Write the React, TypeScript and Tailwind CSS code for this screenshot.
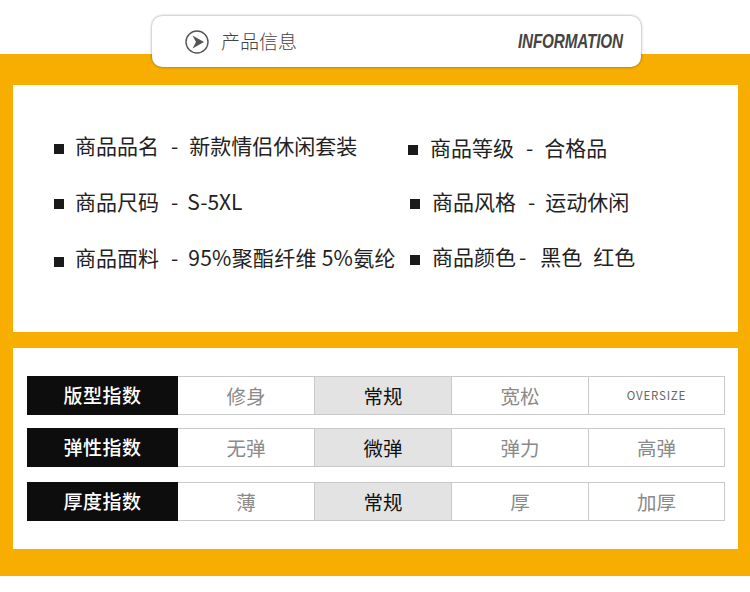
const font = { fontFamily: '"Noto Sans CJK SC", sans-serif' };

function Info({ label, sep, value, className, sq, gap }: { label: string; sep: string; value: React.ReactNode; className: string; sq: string; gap: string }) {
  return (
    <div className={`flex items-center h-[30px] text-[21px] leading-[30px] text-[#222] whitespace-nowrap ${className}`}>
      <span className={`w-[10px] h-[10px] bg-[#1a1a1a] shrink-0 ${gap} ${sq}`} />
      <span className="w-[84px] shrink-0 mb-[6px]">{label}</span>
      <span className={`mb-[6px] ${sep}`}>-</span>
      <span className="mb-[6px]">{value}</span>
    </div>
  );
}

function Row({ label, cells, className }: { label: string; cells: string[]; className: string }) {
  return (
    <div className={`flex h-[39px] ${className}`}>
      <div className="w-[151px] bg-[#0d0d0d] text-white flex items-center justify-center text-[19px] font-medium tracking-[0.5px]">{label}</div>
      <div className="flex-1 grid grid-cols-[137px_137px_137px_1fr] border border-l-0 border-[#c9c9c9]">
        {cells.map((c, i) => (
          <div
            key={i}
            className={`flex items-center justify-center border-r border-[#c9c9c9] last:border-r-0 ${i === 1 ? 'bg-[#e3e3e3] text-[#111]' : 'text-[#8a8a8a]'} ${c === 'OVERSIZE' ? 'text-[11.5px] tracking-[0.8px] text-[#666]' : 'text-[19.5px]'}`}
          >
            {c}
          </div>
        ))}
      </div>
    </div>
  );
}

export default function App() {
  return (
    <div className="w-[750px] h-[592px] bg-white relative overflow-hidden" style={font}>
      <div className="h-[16px]" />
      <div className="relative z-10 ml-[152px] w-[489px] h-[51px] bg-white rounded-[10px] shadow-[0_0_3px_rgba(0,0,0,0.45)] flex items-center pl-[33px] pr-[18px]">
        <svg width="24" height="24" viewBox="0 0 24 24" className="shrink-0">
          <circle cx="12" cy="12" r="11" fill="none" stroke="#555" strokeWidth="1.4" />
          <path d="M7.5 5.5 L19 12 L7.5 18.5 L11 12 Z" fill="#555" />
        </svg>
        <span className="ml-[12px] text-[19px] font-light text-[#444]">产品信息</span>
        <span className="ml-auto text-[20.5px] font-bold italic text-[#444] tracking-[-0.2px] scale-x-[0.745] origin-right" style={{ fontFamily: '"Liberation Sans", sans-serif' }}>INFORMATION</span>
      </div>
      <div className="-mt-[13px] h-[522px] bg-[#f8ae00] pl-[13px] pr-[12px] pt-[31px]">
        <div className="h-[247px] bg-white pt-[48px] pl-[41px]">
          <div className="flex">
            <Info label="商品品名" sep="ml-[12px] mr-[11px]" value="新款情侣休闲套装" className="w-[354px]" sq="mt-[2px]" gap="mr-[11px]" />
            <Info label="商品等级" sep="ml-[12px] mr-[11px]" value="合格品" className="mt-[2px]" sq="" gap="mr-[12px]" />
          </div>
          <div className="flex mt-[24px]">
            <Info label="商品尺码" sep="ml-[12px] mr-[9px]" value="S-5XL" className="w-[356px]" sq="" gap="mr-[11px]" />
            <Info label="商品风格" sep="ml-[12px] mr-[10px]" value="运动休闲" className="" sq="" gap="mr-[12px]" />
          </div>
          <div className="flex mt-[25px]">
            <Info label="商品面料" sep="ml-[12px] mr-[10px]" value={<span className="tracking-[0.25px]">95%聚酯纤维 5%氨纶</span>} className="w-[356px] mt-[1px]" sq="mt-[4px]" gap="mr-[11px]" />
            <Info
              label="商品颜色"
              sep="ml-[3px] mr-[14px]"
              value={<span className="flex gap-[11px]"><span>黑色</span><span>红色</span></span>}
              className=""
              sq="mt-[2px]"
              gap="mr-[12px]"
            />
          </div>
        </div>
        <div className="mt-[16px] h-[201px] bg-white pt-[28px] pl-[14px] pr-[13px]">
          <Row label="版型指数" cells={['修身', '常规', '宽松', 'OVERSIZE']} className="" />
          <Row label="弹性指数" cells={['无弹', '微弹', '弹力', '高弹']} className="mt-[13px]" />
          <Row label="厚度指数" cells={['薄', '常规', '厚', '加厚']} className="mt-[15px]" />
        </div>
      </div>
    </div>
  );
}
